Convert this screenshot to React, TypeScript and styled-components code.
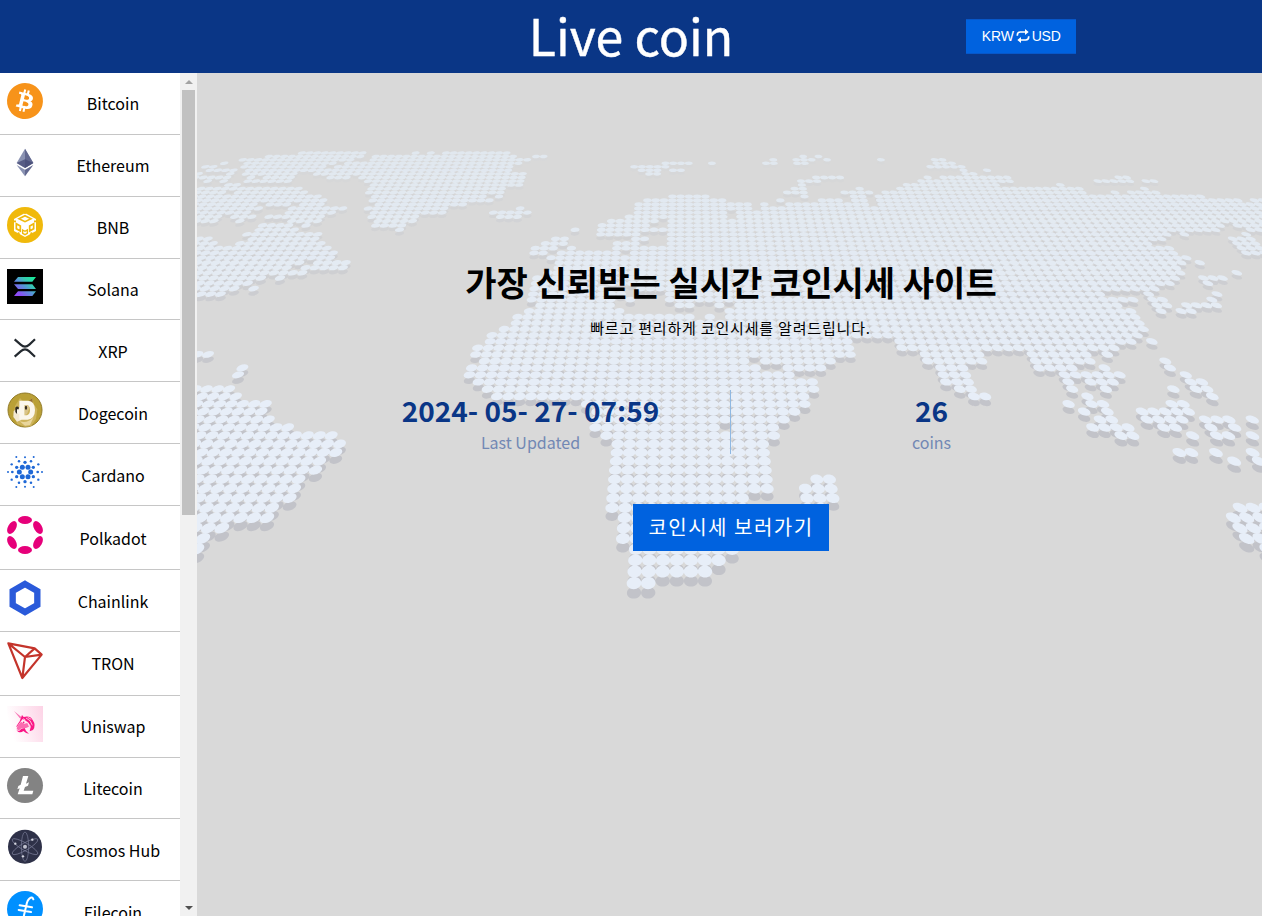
import React from "react";
import styled, { createGlobalStyle } from "styled-components";
import { SiBitcoin, SiLitecoin } from "react-icons/si";

const GlobalStyle = createGlobalStyle`
  * { box-sizing: border-box; }
  body {
    margin: 0;
    overflow: hidden;
    font-family: "Noto Sans CJK KR", "Noto Sans KR", sans-serif;
    color: #000;
  }
`;

const Page = styled.div`
  display: flex;
  flex-direction: column;
  height: 100vh;
  overflow: hidden;
`;

const Header = styled.header`
  flex: none;
  display: grid;
  grid-template-columns: 1fr auto 1fr;
  align-items: center;
  height: 73px;
  background: #0a3686;
`;

const Title = styled.h1`
  grid-column: 2;
  margin: 0;
  padding-bottom: 4px;
  color: #fff;
  font-size: 50px;
  font-weight: 400;
  line-height: 69px;
  -webkit-text-stroke: 0.4px #fff;
`;

const CurrencyButton = styled.button`
  justify-self: start;
  display: flex;
  align-items: center;
  justify-content: center;
  gap: 2px;
  width: 110px;
  height: 35px;
  margin: 0 0 1px 233px;
  padding: 0;
  border: 1px solid #0757c9;
  border-width: 1px 0;
  background: #0062df;
  color: #fff;
  font: 14px "Liberation Sans", Arial, sans-serif;
  letter-spacing: -0.2px;
  white-space: nowrap;
`;

const Body = styled.div`
  flex: 1;
  display: flex;
  min-height: 0;
`;

const Sidebar = styled.aside`
  flex: none;
  display: flex;
  width: 197px;
  background: #fff;
`;

const CoinList = styled.ul`
  width: 180px;
  margin: 0;
  padding: 0;
  list-style: none;
  overflow: hidden;
`;

const CoinRow = styled.li<{ $height: number }>`
  display: flex;
  height: ${(p) => p.$height}px;
  border-bottom: 1px solid #c6c6c6;
`;

const CoinIcon = styled.span`
  flex: none;
  width: 50px;
  padding: 10px 7px 0;
  svg { display: block; overflow: visible; }
`;

const CoinName = styled.span<{ $height: number; $drop: number }>`
  flex: 1;
  padding: ${(p) => p.$drop}px 4px 0 0;
  text-align: center;
  font-size: 16px;
  font-weight: 400;
  line-height: ${(p) => p.$height - 1}px;
`;

const Scrollbar = styled.div`
  flex: none;
  display: flex;
  flex-direction: column;
  align-items: center;
  width: 17px;
  background: #f1f1f1;
`;

const ScrollArrow = styled.div<{ $down?: boolean }>`
  display: grid;
  place-items: center;
  width: 17px;
  height: 17px;
  &::after {
    content: "";
    border: 4px solid transparent;
    border-top-width: ${(p) => (p.$down ? 4 : 0)}px;
    border-bottom-width: ${(p) => (p.$down ? 0 : 4)}px;
    border-${(p) => (p.$down ? "top" : "bottom")}-color: ${(p) => (p.$down ? "#505050" : "#a3a3a3")};
  }
`;

const ScrollThumb = styled.div`
  width: 13px;
  height: 425px;
  margin-bottom: auto;
  background: #c1c1c1;
`;

const Hero = styled.main`
  position: relative;
  flex: 1;
  overflow: hidden;
  background: #d9d9d9;
`;

const MapArt = styled.svg`
  position: absolute;
  inset: 0;
  display: block;
`;

const HeroContent = styled.section`
  position: relative;
  display: flex;
  flex-direction: column;
  align-items: center;
  padding: 184px 0 0 2px;
`;

const Headline = styled.h2`
  margin: 0;
  padding-left: 1px;
  font-size: 34px;
  font-weight: 700;
  line-height: 50px;
`;

const Subline = styled.p`
  margin: 8px 0 0;
  font-size: 15px;
  font-weight: 400;
  line-height: 25px;
  letter-spacing: 0.82px;
`;

const Stats = styled.div`
  display: flex;
  width: 801px;
  margin-top: 49px;
`;

const Stat = styled.div`
  flex: 1;
  height: 65px;
  text-align: center;
`;

const StatDivider = styled.div`
  width: 1px;
  height: 64px;
  margin-top: 1px;
  background: #8fb8e2;
`;

const StatValue = styled.div`
  padding-left: 1px;
  color: #0a3686;
  font-size: 28px;
  font-weight: 700;
  line-height: 42px;
`;

const StatLabel = styled.div`
  padding-left: 1px;
  color: #7288b4;
  font-size: 16px;
  line-height: 22px;
`;

const StartButton = styled.button`
  width: 196px;
  height: 47px;
  margin-top: 50px;
  padding: 0 0 2px 1px;
  border: 0;
  background: #0062df;
  color: #fff;
  font-family: inherit;
  font-size: 20px;
  font-weight: 400;
  letter-spacing: 1.5px;
  white-space: nowrap;
`;

/* ---- dotted world map ---- */

type Span = [number, number];

// Horizontal runs of land for every grid row, bottom row first.
const LAND: Span[][] = [
  [[634, 648]],
  [[634, 705]],
  [[636, 719]],
  [[188, 197], [630, 731], [1262, 1275]],
  [[190, 202], [622, 727], [1248, 1275]],
  [[190, 220], [623, 731], [1241, 1275]],
  [[190, 266], [623, 736], [1235, 1275]],
  [[190, 270], [611, 744], [812, 825], [1241, 1275]],
  [[190, 288], [612, 742], [807, 833]],
  [[190, 293], [612, 767], [806, 831]],
  [[190, 297], [612, 767], [817, 829]],
  [[190, 314], [613, 766]],
  [[190, 319], [614, 766], [1235, 1235], [1260, 1262]],
  [[190, 334], [615, 764], [1180, 1192], [1217, 1217], [1253, 1253]],
  [[190, 339], [615, 763]],
  [[190, 330], [605, 768], [1122, 1133], [1193, 1193], [1217, 1230], [1253, 1253]],
  [[190, 287], [594, 713], [737, 772], [1093, 1128], [1165, 1177], [1212, 1212], [1235, 1235]],
  [[190, 267], [593, 783], [1100, 1112], [1147, 1183], [1205, 1230], [1253, 1253]],
  [[190, 260], [593, 795], [1084, 1084], [1108, 1108], [1143, 1190]],
  [[190, 264], [583, 803], [1069, 1069], [1092, 1103], [1173, 1184]],
  [[190, 234], [495, 807], [974, 985], [1088, 1088], [1213, 1213]],
  [[190, 227], [485, 813], [960, 970], [1072, 1072], [1106, 1106], [1173, 1173], [1195, 1208]],
  [[476, 812], [945, 968], [1068, 1068], [1092, 1113], [1192, 1202]],
  [[235, 235], [467, 792], [943, 965], [1063, 1120], [1185, 1185]],
  [[240, 240], [469, 750], [783, 825], [940, 963], [1037, 1077], [1103, 1103], [1170, 1170]],
  [[482, 747], [763, 835], [925, 982], [1035, 1092], [1166, 1166]],
  [[190, 205], [474, 740], [757, 847], [927, 978], [1032, 1087], [1107, 1107]],
  [[475, 847], [898, 1118]],
  [[489, 847], [898, 1133], [1152, 1152]],
  [[490, 1140]],
  [[502, 1145]],
  [[514, 1140]],
  [[514, 690], [708, 708], [727, 1137]],
  [[525, 618], [730, 1133], [1161, 1161], [1182, 1193]],
  [[537, 612], [675, 690], [717, 717], [735, 1120], [1158, 1168], [1185, 1218]],
  [[530, 613], [628, 628], [667, 1113], [1113, 1135], [1155, 1165], [1213, 1213]],
  [[190, 220], [530, 617], [668, 1102], [1148, 1148], [1217, 1217]],
  [[190, 234], [250, 250], [532, 600], [640, 1157]],
  [[190, 247], [532, 590], [612, 1172], [1208, 1208]],
  [[190, 260], [276, 276], [535, 1177], [1202, 1225]],
  [[190, 277], [285, 300], [552, 1182], [1237, 1237]],
  [[190, 285], [310, 342], [555, 1180]],
  [[190, 287], [296, 296], [322, 344], [563, 1182], [1200, 1200]],
  [[190, 330], [555, 577], [587, 1187]],
  [[190, 224], [235, 330], [530, 544], [558, 580], [593, 618], [630, 1177], [1247, 1262]],
  [[190, 225], [239, 327], [532, 550], [568, 568], [613, 613], [630, 1172], [1242, 1262]],
  [[190, 210], [242, 319], [542, 562], [615, 627], [633, 633], [667, 1150], [1237, 1257]],
  [[190, 205], [255, 315], [552, 562], [633, 647], [667, 1165], [1232, 1253]],
  [[250, 250], [259, 289], [304, 315], [598, 638], [667, 1168], [1184, 1184], [1247, 1247]],
  [[262, 292], [396, 396], [572, 572], [598, 663], [670, 683], [693, 1218], [1250, 1270]],
  [[264, 287], [310, 310], [380, 399], [598, 643], [668, 1223], [1238, 1270]],
  [[190, 210], [244, 244], [295, 317], [374, 410], [608, 653], [668, 725], [735, 1270]],
  [[190, 214], [237, 250], [272, 319], [372, 414], [497, 517], [627, 660], [668, 723], [737, 1270]],
  [[190, 247], [293, 329], [370, 442], [490, 525], [635, 668], [683, 703], [712, 722], [743, 1270]],
  [[190, 257], [295, 340], [372, 443], [517, 517], [636, 703], [716, 750], [762, 868], [878, 1270]],
  [[190, 257], [274, 287], [300, 317], [375, 463], [636, 672], [680, 747], [762, 762], [787, 867], [878, 1270]],
  [[190, 262], [275, 320], [377, 487], [644, 721], [778, 778], [820, 840], [853, 865], [880, 1240], [1253, 1270]],
  [[190, 224], [237, 315], [377, 480], [495, 495], [669, 704], [803, 803], [852, 863], [877, 1202]],
  [[190, 219], [239, 300], [372, 499], [785, 802], [842, 868], [883, 1083], [1114, 1114], [1130, 1157]],
  [[190, 230], [240, 295], [375, 500], [793, 802], [857, 857], [898, 1082], [1143, 1143]],
  [[230, 240], [374, 519], [799, 799], [905, 905], [918, 997], [1059, 1059]],
  [[210, 210], [227, 227], [250, 287], [370, 519], [798, 816], [919, 1008], [1096, 1130], [1145, 1155]],
  [[190, 224], [247, 247], [264, 287], [334, 344], [359, 520], [813, 838], [926, 926], [942, 1007], [1117, 1127]],
  [[200, 200], [234, 234], [245, 252], [264, 290], [320, 522], [646, 654], [963, 972]],
  [[210, 237], [247, 310], [320, 507], [638, 655], [670, 678], [962, 962], [985, 985]],
  [[207, 217], [245, 320], [340, 510], [631, 662], [928, 960]],
  [[226, 226], [249, 329], [349, 517], [662, 686], [709, 709], [763, 771], [794, 802], [935, 950]],
  [[244, 255], [267, 350], [372, 527], [770, 770], [795, 808], [824, 824], [879, 879], [932, 940]],
  [[270, 364], [379, 510], [537, 541], [800, 800], [816, 816]],
  [[304, 366], [418, 418], [434, 434], [449, 510]],
];

const HORIZON = -336;
const CENTER = 686;
const SPREAD = 0.0155;
const PHASE = 0.35;

// Outline of a circle lying on the receding ground plane.
function disc(cx: number, cy: number, a: number, h: number, skew: number) {
  const k = 0.5523;
  const pt = (u: number, v: number) => `${(cx + u * a + v * skew).toFixed(1)} ${(cy + v * h).toFixed(1)}`;
  return (
    `M${pt(1, 0)}C${pt(1, k)} ${pt(k, 1)} ${pt(0, 1)}` +
    `C${pt(-k, 1)} ${pt(-1, k)} ${pt(-1, 0)}` +
    `C${pt(-1, -k)} ${pt(-k, -1)} ${pt(0, -1)}` +
    `C${pt(k, -1)} ${pt(1, -k)} ${pt(1, 0)}Z`
  );
}

const MAP_ROWS = LAND.map((spans, r) => {
  const depth = 1 / (0.00108778 + 0.000013856 * r);
  const y = depth + HORIZON - 0.2;
  const step = depth * SPREAD;
  const pitch = depth * depth * 0.000013856;
  let tops = "";
  let shadows = "";
  const seen = new Set<number>();
  spans.forEach(([from, to]) => {
    const first = Math.round((from - CENTER) / step - PHASE);
    const last = Math.round((to - CENTER) / step - PHASE);
    for (let c = first; c <= last; c++) {
      if (seen.has(c)) continue;
      seen.add(c);
      const x = CENTER + (c + PHASE) * step;
      const skew = ((x - CENTER) / depth) * pitch * 0.5;
      tops += disc(x, y, step * 0.51, pitch * 0.52, skew);
      shadows += disc(x, y + pitch * 0.82, step * 0.5, pitch * 0.5, skew);
    }
  });
  const near = Math.min(1, Math.max(0, (y - 150) / 260));
  return { r, tops, shadows, near };
});

const mix = (a: number, b: number, t: number) => Math.round(a + (b - a) * t);

function WorldMap() {
  return (
    <MapArt width="1065" height="843" viewBox="197 73 1065 843" aria-hidden="true">
      {MAP_ROWS.map(({ r, shadows, near }) => (
        <path key={r} d={shadows} fill={`rgb(${mix(216, 194, near)},${mix(217, 195, near)},${mix(218, 201, near)})`} />
      ))}
      {MAP_ROWS.map(({ r, tops, near }) => (
        <path key={r} d={tops} fill={`rgb(${mix(225, 231, near)},${mix(232, 238, near)},${mix(239, 248, near)})`} />
      ))}
    </MapArt>
  );
}

/* ---- coin logos ---- */

const Logo = ({ children, height = 36 }: { children: React.ReactNode; height?: number }) => (
  <svg width="36" height={height} viewBox={`0 0 108 ${height * 3}`}>{children}</svg>
);

const SwapIcon = () => (
  <svg width="14" height="14" viewBox="0 0 42 42" fill="none" stroke="#fff" strokeWidth="5">
    <path d="M4 20V18Q4 9 13 9H30" />
    <path d="M38 22V24Q38 33 29 33H12" />
    <path d="M27 0 38 9 27 18ZM15 24 4 33 15 42Z" fill="#fff" stroke="none" />
  </svg>
);

const BitcoinLogo = () => <SiBitcoin size={36} color="#f7931a" />;

const LitecoinLogo = () => (
  <Logo height={35}>
    <ellipse cx="54" cy="52.5" rx="54" ry="52.5" fill="#838383" />
    <path d="M48 24H64L57 47 66 43 63 53 54 57 50 68H79L76 79H32L38 61 31 64 34 54 41 50Z" fill="#fff" />
  </Logo>
);

const EthereumLogo = () => (
  <Logo>
    <path d="M54 11 79 54 54 69 29 54Z" fill="#8a92b2" />
    <path d="M54 11 79 54 54 69Z" fill="#62688f" />
    <path d="M54 43 79 54 54 69 29 54Z" fill="#454a75" opacity=".75" />
    <path d="M29 60 54 74V94Z" fill="#8a92b2" />
    <path d="M79 60 54 74V94Z" fill="#62688f" />
  </Logo>
);

const BnbLogo = () => (
  <Logo>
    <circle cx="54" cy="54" r="54" fill="#f0b90b" />
    <path d="M54 18 87 36V72L54 90 21 72V36Z" fill="#fff" />
    <g fill="none" stroke="#f0b90b" strokeWidth="5">
      <path d="M36 35 54 26 72 35 54 44Z" />
      <path d="M28 50 40 57V72L28 65ZM80 50 68 57V72L80 65Z" />
      <path d="M47 69 54 73 61 69V79L54 83 47 79Z" strokeWidth="4" />
      <path d="M20 43H27M81 43H88M34 76 37 84M74 76 71 84M54 15V21" />
    </g>
  </Logo>
);

const SolanaLogo = () => (
  <Logo height={35}>
    <defs>
      <linearGradient id="sol" gradientUnits="userSpaceOnUse" x1="25" y1="84" x2="82" y2="22">
        <stop offset="0" stopColor="#9945ff" />
        <stop offset=".2" stopColor="#8752f3" />
        <stop offset=".5" stopColor="#5497d5" />
        <stop offset=".7" stopColor="#36c8b0" />
        <stop offset="1" stopColor="#14f195" />
      </linearGradient>
    </defs>
    <path d="M0 0H108V105H0Z" fill="#000" />
    <path d="M33 24H87L76 38H21ZM21 46H76L87 60H33ZM33 67H87L76 81H21Z" fill="url(#sol)" />
  </Logo>
);

const XrpLogo = () => (
  <Logo>
    <g fill="none" stroke="#23292f" strokeWidth="6.5">
      <path d="M23 28 41 44Q54 56 67 44L84 28" />
      <path d="M23 80 41 64Q54 52 67 64L84 80" />
    </g>
  </Logo>
);

const DogecoinLogo = () => (
  <Logo>
    <circle cx="54" cy="54" r="51" fill="#baa036" stroke="#927b28" strokeWidth="3" />
    <path d="M39 18 49 29 67 28 76 16 80 36 91 52 87 81 72 103 54 104 30 96 20 66 24 42Z" fill="#cdb35b" />
    <path d="M20 57 41 44 43 84 30 89 19 75Z" fill="#f2e8d2" />
    <path d="M65 28 76 18 77 32M39 20 46 29" fill="#967032" />
    <path d="M25 47Q29 41 35 45L36 56 30 66 25 60Z" fill="#2f2b22" />
    <path fillRule="evenodd" d="M37 26H63Q84 28 84 54 84 80 62 83H37V65H30V52H37ZM53 39V70H60Q69 67 69 55 69 41 60 39Z" fill="#fbf7ec" />
    <path d="M53 39H60Q66 41 68 47L60 66 53 70Z" fill="#d9c48a" />
    <ellipse cx="57" cy="47" rx="3.5" ry="6" fill="#382f24" />
    <path d="M38 88Q61 96 80 76L69 99 54 101Z" fill="#e9d69c" />
  </Logo>
);

const CARDANO: [number, number, number][] = [
  [54, 12, 3], [54, 100, 3], [28, 11, 3], [80, 11, 3], [28, 101, 3], [80, 101, 3], [3, 56, 3], [105, 56, 3],
  [36, 24, 3.8], [72, 24, 3.8], [36, 88, 3.8], [72, 88, 3.8], [14, 33, 3.5], [94, 33, 3.5],
  [14, 79, 3.5], [94, 79, 3.5], [16, 56, 4], [92, 56, 4], [54, 27, 5], [54, 85, 5],
  [29, 42, 5], [79, 42, 5], [29, 70, 5], [79, 70, 5],
  [46, 42, 7.5], [63, 42, 7.5], [46, 70, 7.5], [63, 70, 7.5], [37, 56, 7.5], [71, 56, 7.5],
];

const CardanoLogo = () => (
  <Logo>
    {CARDANO.map(([x, y, r], i) => <circle key={i} cx={x} cy={y - 2} r={r} fill="#1f68d6" />)}
  </Logo>
);

const PolkadotLogo = () => (
  <Logo height={38}>
    <g fill="#e6007a">
      <ellipse cx="54" cy="12" rx="21" ry="12" />
      <ellipse cx="54" cy="102" rx="21" ry="12" />
      <ellipse cx="15" cy="34.5" rx="21" ry="12" transform="rotate(-60 15 34.5)" />
      <ellipse cx="93" cy="34.5" rx="21" ry="12" transform="rotate(60 93 34.5)" />
      <ellipse cx="15" cy="79.5" rx="21" ry="12" transform="rotate(60 15 79.5)" />
      <ellipse cx="93" cy="79.5" rx="21" ry="12" transform="rotate(-60 93 79.5)" />
    </g>
  </Logo>
);

const ChainlinkLogo = () => (
  <Logo>
    <path d="M54 12 91 33V75L54 96 17 75V33Z" fill="none" stroke="#2a5ada" strokeWidth="19" />
  </Logo>
);

const TronLogo = () => (
  <Logo height={38}>
    <path d="M4 4 83 19 104 38 46 108ZM4 4 54 45 104 38M54 45 83 19M54 45 46 108" fill="none" stroke="#c4342b" strokeWidth="6.5" strokeLinejoin="round" />
  </Logo>
);

const UniswapLogo = () => (
  <Logo>
    <defs>
      <linearGradient id="uni" x1="0" y1=".3" x2="1" y2="0">
        <stop offset="0" stopColor="#fff" />
        <stop offset="1" stopColor="#fdd3e6" />
      </linearGradient>
    </defs>
    <path d="M0 0H108V108H0Z" fill="url(#uni)" />
    <path d="M21 15 42 32 45 39 38 36Z" fill="#f874b5" />
    <path d="M45 27 50 33Q70 28 77 42 88 58 78 72L68 76 71 62 64 50 56 44 47 39 40 48 31 61 28 64Q26 76 37 74L43 68 53 66Q55 76 66 83 57 83 49 75 42 81 33 77 25 70 29 59L38 46Z" fill="#fa1685" />
    <path d="M31 61 42 47 52 53 61 51 66 62 57 66 43 67 36 73 29 70Z" fill="#fb6cb0" />
    <path d="M57 36 69 44 76 58M62 34 73 40M60 47 69 59 67 71M49 38 55 42" fill="none" stroke="#ffdcec" strokeWidth="2.5" />
    <circle cx="50" cy="49" r="2.5" fill="#f50d79" />
  </Logo>
);

const CosmosLogo = () => (
  <Logo>
    <circle cx="54" cy="53" r="51" fill="#2e3148" />
    <g fill="none" stroke="#7c7f9a" strokeWidth="2">
      <ellipse cx="54" cy="53" rx="11" ry="44" />
      <ellipse cx="54" cy="53" rx="11" ry="44" transform="rotate(60 54 53)" />
      <ellipse cx="54" cy="53" rx="11" ry="44" transform="rotate(-60 54 53)" />
    </g>
    <circle cx="54" cy="53" r="6" fill="#c0c1ce" />
    <g fill="#d5d6e0">
      <circle cx="76" cy="32" r="3.5" /><circle cx="25" cy="44" r="3.5" /><circle cx="48" cy="82" r="3.5" />
    </g>
  </Logo>
);

const FilecoinLogo = () => (
  <Logo>
    <circle cx="54" cy="54" r="54" fill="#0090ff" />
    <path d="M79 25Q76 16 68 22 61 27 58 43L51 73Q47 92 37 92 31 92 29 86M38 43 75 49M35 57 72 63" fill="none" stroke="#fff" strokeWidth="6" strokeLinecap="round" />
  </Logo>
);

const COINS: { name: string; height: number; drop?: number; Icon: React.FC }[] = [
  { name: "Bitcoin", height: 62, Icon: BitcoinLogo },
  { name: "Ethereum", height: 62, Icon: EthereumLogo },
  { name: "BNB", height: 62, Icon: BnbLogo },
  { name: "Solana", height: 61, Icon: SolanaLogo },
  { name: "XRP", height: 62, drop: 1, Icon: XrpLogo },
  { name: "Dogecoin", height: 62, drop: 1, Icon: DogecoinLogo },
  { name: "Cardano", height: 62, drop: 1, Icon: CardanoLogo },
  { name: "Polkadot", height: 64, drop: 1, Icon: PolkadotLogo },
  { name: "Chainlink", height: 62, drop: 1, Icon: ChainlinkLogo },
  { name: "TRON", height: 64, Icon: TronLogo },
  { name: "Uniswap", height: 62, Icon: UniswapLogo },
  { name: "Litecoin", height: 61, Icon: LitecoinLogo },
  { name: "Cosmos Hub", height: 62, drop: 1, Icon: CosmosLogo },
  { name: "Filecoin", height: 62, drop: 1, Icon: FilecoinLogo },
];

export default function App() {
  return (
    <Page>
      <GlobalStyle />
      <Header>
        <Title>Live coin</Title>
        <CurrencyButton>
          KRW
          <SwapIcon />
          USD
        </CurrencyButton>
      </Header>
      <Body>
        <Sidebar>
          <CoinList>
            {COINS.map(({ name, height, drop = 0, Icon }) => (
              <CoinRow key={name} $height={height}>
                <CoinIcon><Icon /></CoinIcon>
                <CoinName $height={height} $drop={drop}>{name}</CoinName>
              </CoinRow>
            ))}
          </CoinList>
          <Scrollbar>
            <ScrollArrow />
            <ScrollThumb />
            <ScrollArrow $down />
          </Scrollbar>
        </Sidebar>
        <Hero>
          <WorldMap />
          <HeroContent>
            <Headline>가장 신뢰받는 실시간 코인시세 사이트</Headline>
            <Subline>빠르고 편리하게 코인시세를 알려드립니다.</Subline>
            <Stats>
              <Stat>
                <StatValue>2024- 05- 27- 07:59</StatValue>
                <StatLabel>Last Updated</StatLabel>
              </Stat>
              <StatDivider />
              <Stat>
                <StatValue>26</StatValue>
                <StatLabel>coins</StatLabel>
              </Stat>
            </Stats>
            <StartButton>코인시세 보러가기</StartButton>
          </HeroContent>
        </Hero>
      </Body>
    </Page>
  );
}
